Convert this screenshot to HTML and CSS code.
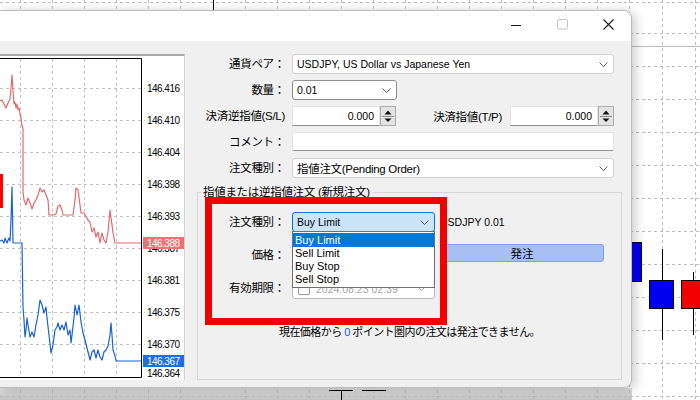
FILE: index.html
```html
<!DOCTYPE html>
<html lang="ja">
<head>
<meta charset="utf-8">
<title>注文</title>
<link rel="stylesheet" href="styles.css">
</head>
<body>
<svg class="backdrop" width="700" height="400" viewBox="0 0 700 400">
  <defs>
    <linearGradient id="shade" x1="0" y1="0" x2="0" y2="1">
      <stop offset="0" stop-color="#e2e2e2"/>
      <stop offset="1" stop-color="#c4c4c4"/>
    </linearGradient>
  </defs>
  <rect width="700" height="400" fill="#fff"/>
  <rect x="0" y="388" width="632" height="12" fill="url(#shade)"/>
  <g stroke="#bdbdbd" stroke-dasharray="3 3" fill="none">
    <path d="M0 2.5H700M0 33.5H700M0 66.5H700M0 99.5H700M0 132.5H700M0 165.5H700M0 198.5H700M0 231.5H700M0 264.5H700M0 297.5H700M0 330.5H700M0 363.5H700M0 396.5H700"/>
    <path d="M20.5 0V400M52.5 0V400M84.5 0V400M116.5 0V400M148.5 0V400M180.5 0V400M245.5 0V400M277.5 0V400M309.5 0V400M341.5 0V400M373.5 0V400M405.5 0V400M437.5 0V400M469.5 0V400M501.5 0V400M533.5 0V400M565.5 0V400M597.5 0V400M629.5 0V400M662.5 0V400M695.5 0V400"/>
  </g>
  <line x1="632" y1="46.5" x2="700" y2="46.5" stroke="#bcbcbc"/>
  <line x1="213.5" y1="0" x2="213.5" y2="10" stroke="#000"/>
  <g stroke="#000">
    <line x1="341.5" y1="390" x2="341.5" y2="400"/>
    <line x1="329" y1="390.5" x2="353" y2="390.5"/>
    <line x1="362" y1="390.5" x2="386" y2="390.5"/>
    <line x1="662.5" y1="249" x2="662.5" y2="340"/>
    <line x1="693.5" y1="272" x2="693.5" y2="335"/>
    <rect x="620.5" y="242.5" width="21" height="39" fill="#0000f0"/>
    <rect x="649.5" y="280.5" width="24" height="28" fill="#0000f0"/>
    <rect x="681.5" y="280.5" width="30" height="28" fill="#f00000"/>
  </g>
</svg>

<div class="window">
  <div class="titlebar">
    <div class="caption-buttons">
      <span class="cap"><svg width="10" height="10" viewBox="0 0 10 10"><line x1="0" y1="5.5" x2="10" y2="5.5" stroke="#1a1a1a"/></svg></span>
      <span class="cap"><svg width="11" height="11" viewBox="0 0 11 11"><rect x="0.5" y="0.5" width="10" height="9.5" rx="1.5" fill="none" stroke="#c2c2c2"/></svg></span>
      <span class="cap"><svg width="11" height="11" viewBox="0 0 11 11"><path d="M0.5 0.5L10.5 10.5M10.5 0.5L0.5 10.5" stroke="#1a1a1a" stroke-width="1.1"/></svg></span>
    </div>
  </div>

  <div class="body">
    <div class="chart-panel">
      <svg width="184" height="324" viewBox="0 56 184 324">
        <rect x="0" y="56" width="184" height="324" fill="#fff"/>
        <g stroke="#c2c2c2" stroke-dasharray="3 3" fill="none">
          <path d="M0 88.5H145M0 120.5H145M0 152.5H145M0 184.5H145M0 216.5H145M0 248.5H145M0 280.5H145M0 312.5H145M0 344.5H145"/>
          <path d="M20.5 59V377M52.5 59V377M84.5 59V377M116.5 59V377"/>
        </g>
        <rect x="0" y="174" width="3" height="34" fill="#f00"/>
        <polyline fill="none" stroke="#e46a6a" stroke-width="1.2" stroke-linejoin="round"
          points="0,101 2,100 4,104 6,108 8,103 10,99 11,88 12,75 13,90 14,104 15,102 16,108 17,104 18,110 19,108 20,114 21,118 22,126 23,128 23,192 24,200 26,205 28,198 30,203 32,209 34,203 36,200 38,195 40,188 42,192 44,190 46,195 48,200 49,215 53,215 56,214 58,206 60,205 62,210 63,215 73,215 75,200 76,188 78,190 80,205 81,213 84,213 86,216 88,220 90,222 92,232 94,228 96,237 98,232 100,243 102,233 104,240 106,243 108,232 110,210 112,225 113,233 115,243 141,243"/>
        <polyline fill="none" stroke="#1862d8" stroke-width="1.2" stroke-linejoin="round"
          points="0,241 2,240 4,243 5,238 7,243 9,238 10,241 11,220 12,187 13,243 22,243 23,307 24,320 25,337 26,330 27,318 28,325 30,337 32,332 34,337 36,325 38,315 40,300 42,305 44,313 46,307 47,318 49,335 51,353 53,345 55,330 57,327 58,323 60,330 62,325 64,330 66,322 68,335 70,330 71,343 72,335 74,318 75,305 77,315 79,305 81,322 83,333 85,340 88,352 90,360 92,352 94,350 96,358 98,350 100,357 102,360 104,352 106,350 108,346 110,335 111,323 112,335 113,350 115,356 116,361 141,361"/>
        <path d="M0 58.5H141.5V377.5H0" fill="none" stroke="#000"/>
        <g class="axis">
          <text x="147" y="92" textLength="33">146.416</text>
          <text x="147" y="124" textLength="33">146.410</text>
          <text x="147" y="156" textLength="33">146.404</text>
          <text x="147" y="188" textLength="33">146.398</text>
          <text x="147" y="220" textLength="33">146.393</text>
          <text x="147" y="252" textLength="33">146.387</text>
          <text x="147" y="284" textLength="33">146.381</text>
          <text x="147" y="316" textLength="33">146.375</text>
          <text x="147" y="348" textLength="33">146.370</text>
          <text x="147" y="377" textLength="33">146.364</text>
        </g>
        <rect x="143" y="237" width="41" height="12" fill="#ee7272"/>
        <text class="tag" x="147" y="247" textLength="33">146.388</text>
        <rect x="143" y="355" width="41" height="12" fill="#1c6fe6"/>
        <text class="tag" x="147" y="365" textLength="33">146.367</text>
      </svg>
    </div>

    <div class="form">
      <div class="rows">
        <span class="lbl">通貨ペア：</span>
        <div class="select"><span class="val">USDJPY, US Dollar vs Japanese Yen</span><svg class="chev" width="9" height="5" viewBox="0 0 9 5"><polyline points="0.5,0.5 4.5,4.5 8.5,0.5" fill="none" stroke="#5a5a5a"/></svg></div>

        <span class="lbl">数量：</span>
        <div class="field"><div class="select dark short"><span class="val">0.01</span><svg class="chev" width="9" height="5" viewBox="0 0 9 5"><polyline points="0.5,0.5 4.5,4.5 8.5,0.5" fill="none" stroke="#5a5a5a"/></svg></div></div>

        <span class="lbl">決済逆指値(S/L)</span>
        <div class="field">
          <div class="spin">
            <span class="spin-input val">0.000</span>
            <span class="spin-btn"><svg width="14" height="18" viewBox="0 0 14 18"><path d="M3.5 7.5H10.5L7 3.5Z" fill="#111"/><line x1="1" y1="9.5" x2="13" y2="9.5" stroke="#8a8a8a"/><path d="M3.5 11.5H10.5L7 15Z" fill="#111"/></svg></span>
          </div>
          <div class="tp">
            <span class="lbl-inline">決済指値(T/P)</span>
            <div class="spin">
              <span class="spin-input val">0.000</span>
              <span class="spin-btn"><svg width="14" height="18" viewBox="0 0 14 18"><path d="M3.5 7.5H10.5L7 3.5Z" fill="#111"/><line x1="1" y1="9.5" x2="13" y2="9.5" stroke="#8a8a8a"/><path d="M3.5 11.5H10.5L7 15Z" fill="#111"/></svg></span>
            </div>
          </div>
        </div>

        <span class="lbl">コメント：</span>
        <div class="input"></div>

        <span class="lbl">注文種別：</span>
        <div class="select"><span class="cjk">指値注文(Pending Order)</span><svg class="chev" width="9" height="5" viewBox="0 0 9 5"><polyline points="0.5,0.5 4.5,4.5 8.5,0.5" fill="none" stroke="#5a5a5a"/></svg></div>
      </div>

      <fieldset class="group">
        <legend>指値または逆指値注文 (新規注文)</legend>
        <div class="grows">
          <span class="lbl">注文種別：</span>
          <div class="select focus"><span class="val">Buy Limit</span><svg class="chev" width="9" height="5" viewBox="0 0 9 5"><polyline points="0.5,0.5 4.5,4.5 8.5,0.5" fill="none" stroke="#5a5a5a"/></svg></div>
          <span class="info val">USDJPY 0.01</span>

          <span class="lbl">価格：</span>
          <div class="input gin"></div>
          <button class="place">発注</button>

          <span class="lbl">有効期限：</span>
          <div class="datepick">
            <span class="check"></span>
            <span class="date val">2024.08.23 02:39</span>
            <svg class="chev" width="9" height="5" viewBox="0 0 9 5"><polyline points="0.5,0.5 4.5,4.5 8.5,0.5" fill="none" stroke="#9a9a9a"/></svg>
          </div>
          <span></span>
        </div>
        <p class="msg">現在価格から <span class="num">0</span> ポイント圏内の注文は発注できません。</p>
      </fieldset>

      <ul class="dropdown">
        <li class="sel">Buy Limit</li>
        <li>Sell Limit</li>
        <li>Buy Stop</li>
        <li>Sell Stop</li>
      </ul>
      <div class="redbox"></div>
    </div>
  </div>
</div>
</body>
</html>
```

FILE: styles.css
```css
* { box-sizing: border-box; }
html, body { margin: 0; padding: 0; }
body {
  width: 700px;
  height: 400px;
  overflow: hidden;
  position: relative;
  background: #fff;
  font-family: "Liberation Sans", "Noto Sans CJK JP", sans-serif;
  font-size: 11px;
  color: #000;
}
.backdrop { position: absolute; left: 0; top: 0; }

.window {
  position: absolute;
  left: -1px;
  top: 10px;
  width: 633px;
  height: 378px;
  background: #f0f0f0;
  border: 1px solid #bcbcbc;
  border-radius: 0 8px 8px 0;
  box-shadow: 3px 2px 12px rgba(0, 0, 0, 0.22);
  display: flex;
  flex-direction: column;
  overflow: hidden;
}
.titlebar {
  height: 30px;
  background: #fff;
  display: flex;
  justify-content: flex-end;
  flex-shrink: 0;
}
.caption-buttons { display: flex; }
.cap {
  width: 46px;
  height: 30px;
  display: flex;
  align-items: center;
  justify-content: center;
  padding-bottom: 3px;
}
.cap svg { display: block; }

.body {
  flex: 1;
  display: flex;
  align-items: flex-start;
}
.chart-panel {
  margin-top: 13px;
  width: 185px;
  height: 326px;
  border-top: 2px solid #a9a9a9;
  border-right: 1px solid #d2d2d2;
  background: #fff;
  flex-shrink: 0;
}
.chart-panel svg { display: block; }
.axis text, .tag {
  font-family: "Liberation Sans", sans-serif;
  font-size: 10px;
}
.axis text { fill: #000; }
.tag { fill: #fff; }

.form {
  position: relative;
  margin: 13px 0 0 12px;
  width: 425px;
}
.rows {
  display: grid;
  grid-template-columns: 88px 322px;
  grid-auto-rows: 20px;
  column-gap: 7px;
  row-gap: 6px;
}
.lbl {
  text-align: right;
  font-size: 11.5px;
  letter-spacing: -0.3px;
  line-height: 20px;
  white-space: nowrap;
}
.val { font-size: 10.5px; letter-spacing: 0; white-space: nowrap; }
.cjk { font-size: 11.5px; letter-spacing: -0.3px; white-space: nowrap; }

.select {
  height: 20px;
  background: #fff;
  border: 1px solid #cfcfcf;
  border-radius: 3px;
  display: flex;
  align-items: center;
  justify-content: space-between;
  padding: 0 5px 0 4px;
}
.select.dark { border-color: #8e8e8e; }
.select.short { width: 105px; }
.select.focus { background: #cce4f7; border-color: #0078d7; }
.chev { display: block; flex-shrink: 0; }

.field { display: flex; align-items: center; }
.tp { margin-left: auto; display: flex; align-items: center; gap: 8px; }
.lbl-inline { font-size: 11.5px; letter-spacing: -0.3px; white-space: nowrap; }
.spin { display: flex; width: 104px; height: 20px; }
.spin-input {
  flex: 1;
  background: #fff;
  border: 1px solid #e3e3e3;
  border-bottom-color: #8c8c8c;
  text-align: right;
  padding-right: 5px;
  line-height: 18px;
}
.spin-btn {
  width: 16px;
  border: 1px solid #adadad;
  background: #e3e3e3;
  display: flex;
  align-items: center;
  justify-content: center;
}
.spin-btn svg { display: block; }
.input {
  height: 19px;
  background: #fff;
  border: 1px solid #e3e3e3;
  border-bottom-color: #8c8c8c;
  border-radius: 2px;
}

.group {
  margin: 7px 0 0 0;
  padding: 13px 0 0 0;
  width: 425px;
  height: 195px;
  border: 1px solid #d6d6d6;
  min-width: 0;
}
.group legend {
  font-size: 11.5px;
  letter-spacing: -0.3px;
  line-height: 14px;
  padding: 0 2px;
  margin-left: 3px;
}
.grows {
  display: grid;
  grid-template-columns: 94px 148px 164px;
  grid-template-rows: 20px 20px 21px;
  row-gap: 13px;
}
.grows .lbl { padding-right: 7px; }
.grows .select, .grows .gin, .datepick { width: 143px; }
.gin { height: 20px; }
.info { line-height: 20px; }
.place {
  height: 18px;
  margin: -1px 0 0 0;
  padding: 0;
  background: #a7bff3;
  border: 1px solid #7f9de6;
  border-radius: 3px;
  font-family: inherit;
  font-size: 11.5px;
  color: #000;
}
.datepick {
  height: 21px;
  background: #fff;
  border: 1px solid #b9b9b9;
  border-radius: 3px;
  display: flex;
  align-items: center;
  padding: 0 8px 0 5px;
}
.check {
  width: 12px;
  height: 12px;
  border: 1px solid #9a9a9a;
  border-radius: 2px;
  background: #fff;
  flex-shrink: 0;
}
.date { color: #a6a6a6; margin-left: 6px; flex: 1; }
.msg {
  margin: 26px 0 0 0;
  text-align: center;
  font-size: 11px;
  letter-spacing: -0.55px;
  line-height: 14px;
}
.num { color: #2a55d6; }

.dropdown {
  position: absolute;
  left: 95px;
  top: 177px;
  width: 143px;
  margin: 0;
  padding: 1px 0 1px 0;
  list-style: none;
  background: #fff;
  border: 1px solid #6f6f6f;
}
.dropdown li {
  height: 13px;
  line-height: 13px;
  padding-left: 2px;
  font-size: 11px;
}
.dropdown li.sel { background: #0078d7; color: #fff; height: 14px; line-height: 14px; }

.redbox {
  position: absolute;
  left: 8px;
  top: 143px;
  width: 242px;
  height: 128px;
  border: 7px solid #f20000;
}
```
